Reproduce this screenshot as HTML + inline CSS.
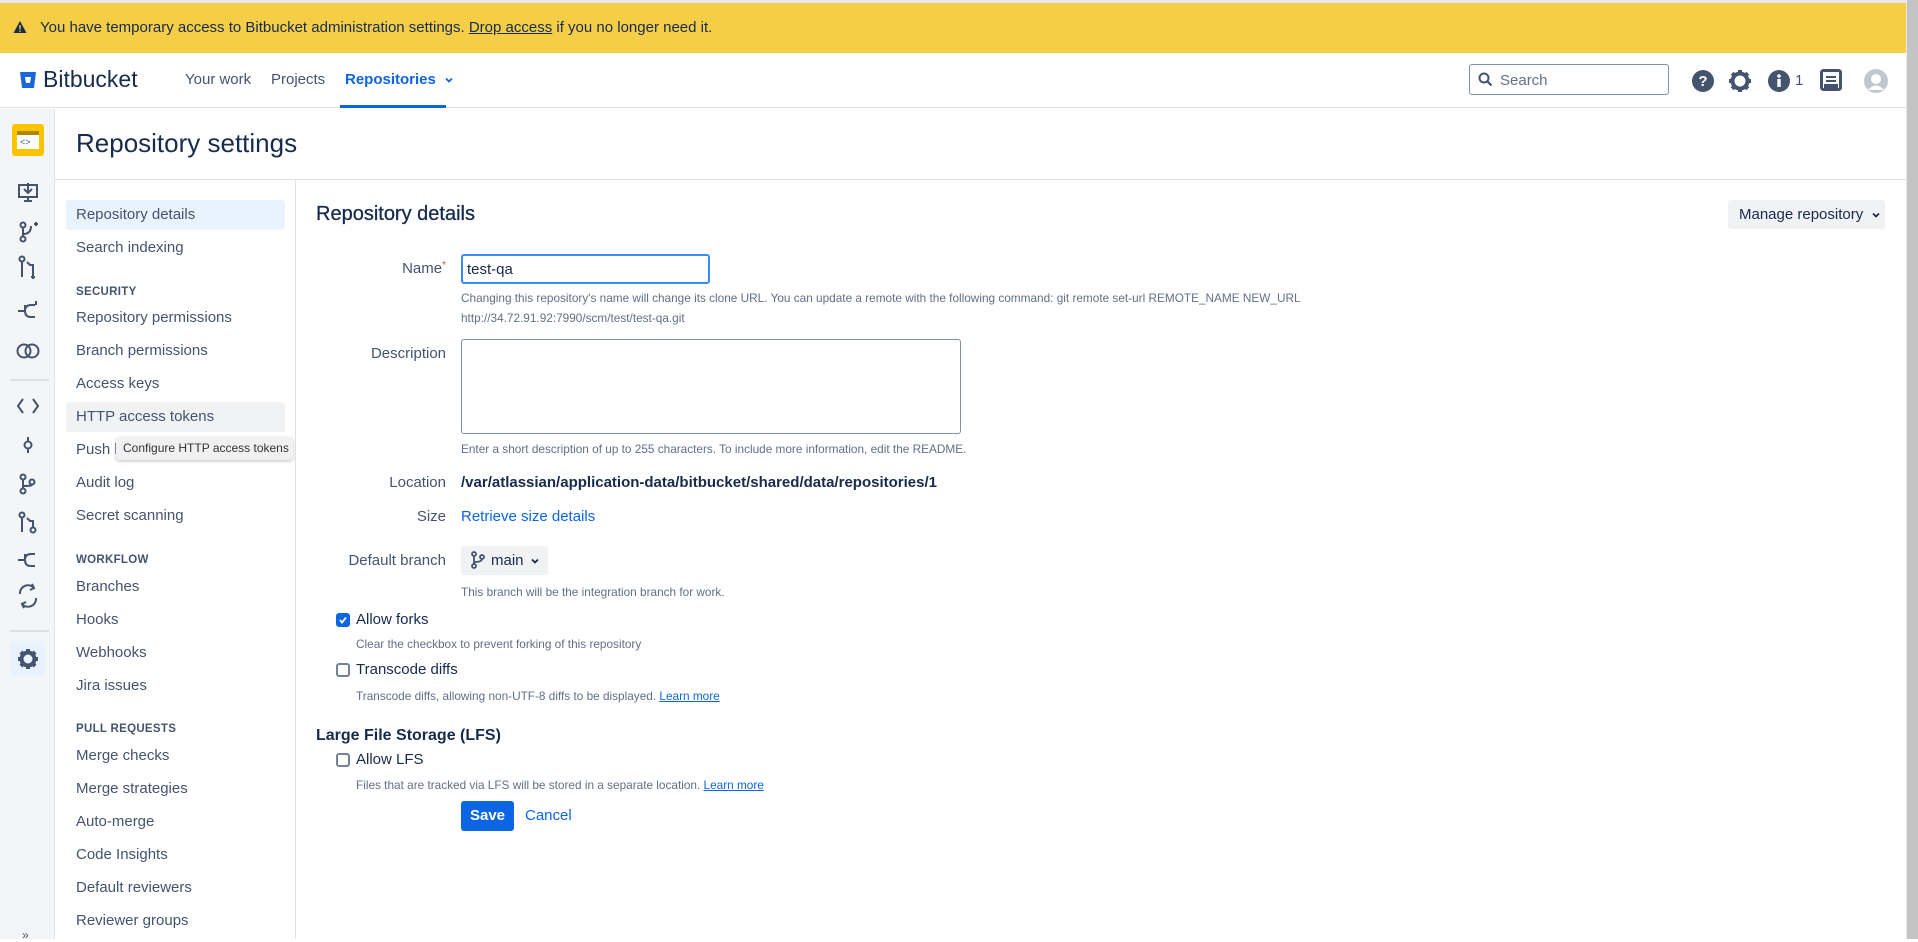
<!DOCTYPE html>
<html><head><meta charset="utf-8">
<style>
*{box-sizing:border-box;margin:0;padding:0}
body{width:1918px;height:939px;overflow:hidden;background:#fff;font-family:"Liberation Sans",Arial,sans-serif;color:#172b4d;position:relative}
.a{position:absolute;white-space:nowrap}
.banner{left:0;top:3px;width:1906px;height:50px;background:#f5cd47}
.topline{left:0;top:0;width:1906px;height:3px;background:#eae6f0}
.nav{left:0;top:53px;width:1906px;height:55px;border-bottom:1px solid #dfe1e6;background:#fff}
.side{left:0;top:109px;width:55px;height:830px;background:#f4f5f7;border-right:1px solid #dfe1e6}
.sb{right:0;top:0;width:12px;height:939px;background:#c4c4c4;border-left:1px solid #e8e8e8}
.ni{left:76px;font-size:15px;color:#44546f}
.nh{left:76px;font-size:11.5px;font-weight:bold;color:#44546f;letter-spacing:.3px}
.lbl{font-size:15px;color:#44546f;text-align:right;width:200px;left:246px}
.help{font-size:11.8px;color:#626f86;left:461px}
.chev{display:inline-block;vertical-align:middle;margin-left:4px}
</style></head><body>
<div class="a topline"></div>
<div class="a banner"></div>
<svg class="a" style="left:13px;top:20px" width="14" height="14" viewBox="0 0 14 14"><path d="M7 1 L13.5 13 H0.5 Z" fill="#172b4d"/><rect x="6.3" y="5" width="1.4" height="4.5" fill="#f5cd47"/><rect x="6.3" y="10.5" width="1.4" height="1.4" fill="#f5cd47"/></svg>
<div class="a" style="left:40px;top:19px;font-size:15px;color:#172b4d">You have temporary access to Bitbucket administration settings. <span style="text-decoration:underline">Drop access</span> if you no longer need it.</div>

<div class="a nav"></div>
<svg class="a" style="left:20px;top:71px" width="16" height="18" viewBox="0 0 16 18"><path d="M0 1 H16 L14 17 H2 Z" fill="#1868db"/><path d="M5 6 H11 L10 12 H6 Z" fill="#fff"/></svg>
<div class="a" style="left:43px;top:66px;font-size:23px;color:#172b4d">Bitbucket</div>
<div class="a" style="left:185px;top:71px;font-size:15px;color:#44546f">Your work</div>
<div class="a" style="left:271px;top:71px;font-size:15px;color:#44546f">Projects</div>
<div class="a" style="left:345px;top:71px;font-size:15px;color:#0c66e4;font-weight:bold">Repositories<svg class="chev" style="margin-left:8px" width="10" height="8" viewBox="0 0 10 8"><path d="M2 2.5 L5 5.5 L8 2.5" fill="none" stroke="#0c66e4" stroke-width="1.8"/></svg></div>
<div class="a" style="left:340px;top:105px;width:106px;height:3px;background:#0c66e4"></div>
<div class="a" style="left:1469px;top:64px;width:200px;height:31px;border:1px solid #8590a2;border-radius:3px"></div>
<svg class="a" style="left:1478px;top:72px" width="15" height="15" viewBox="0 0 15 15"><circle cx="6" cy="6" r="4.5" fill="none" stroke="#44546f" stroke-width="2"/><path d="M9.5 9.5 L13.5 13.5" stroke="#44546f" stroke-width="2.2"/></svg>
<div class="a" style="left:1500px;top:72px;font-size:15px;color:#626f86">Search</div>
<svg class="a" style="left:1691px;top:69px" width="24" height="24" viewBox="0 0 24 24"><circle cx="12" cy="12" r="11" fill="#44546f"/><text x="12" y="17" text-anchor="middle" font-family="Liberation Sans" font-weight="bold" font-size="15" fill="#fff">?</text></svg>
<svg class="a" style="left:1728px;top:69px" width="24" height="24" viewBox="0 0 24 24"><circle cx="12" cy="12" r="7.5" fill="none" stroke="#44546f" stroke-width="4"/><g fill="#44546f"><rect x="10" y="1" width="4" height="5"/><rect x="10" y="18" width="4" height="5"/><rect x="1" y="10" width="5" height="4"/><rect x="18" y="10" width="5" height="4"/><rect x="10" y="1" width="4" height="5" transform="rotate(45 12 12)"/><rect x="10" y="18" width="4" height="5" transform="rotate(45 12 12)"/><rect x="1" y="10" width="5" height="4" transform="rotate(45 12 12)"/><rect x="18" y="10" width="5" height="4" transform="rotate(45 12 12)"/></g></svg>
<svg class="a" style="left:1767px;top:69px" width="24" height="24" viewBox="0 0 24 24"><circle cx="12" cy="12" r="11" fill="#44546f"/><circle cx="12" cy="7" r="1.8" fill="#fff"/><rect x="10.3" y="10" width="3.4" height="8" fill="#fff"/></svg>
<div class="a" style="left:1795px;top:72px;font-size:15px;color:#44546f">1</div>
<svg class="a" style="left:1820px;top:69px" width="22" height="22" viewBox="0 0 22 22"><rect x="1.5" y="1.5" width="19" height="19" rx="2" fill="none" stroke="#44546f" stroke-width="3"/><rect x="6" y="7" width="10" height="2" fill="#44546f"/><rect x="6" y="11" width="10" height="2" fill="#44546f"/><rect x="4" y="15" width="14" height="4" fill="#44546f"/></svg>
<svg class="a" style="left:1863px;top:68px" width="26" height="26" viewBox="0 0 26 26"><circle cx="13" cy="13" r="12" fill="#c1c7d0"/><circle cx="13" cy="11" r="5" fill="#fff"/><path d="M5 22 Q13 13 21 22" fill="#fff"/></svg>

<div class="a side"></div>
<div class="a" style="left:12px;top:124px;width:32px;height:32px;background:#ffc400;border-radius:3px"></div>
<div class="a" style="left:17px;top:131px;width:22px;height:18px;background:#fff;border-top:4px solid #b38600"></div>
<div class="a" style="left:20px;top:137px;font-size:9px;color:#44546f">&lt;&gt;</div>
<svg class="a" style="left:15px;top:180px" width="26" height="440" viewBox="0 0 26 440" fill="none" stroke="#44546f" stroke-width="2">
<path d="M4 5 H22 V17 H4 Z M13 3 V12 M9 9 L13 13 L17 9 M9 21 H17 M13 17 V21"/>
<circle cx="8" cy="45" r="2.5"/><circle cx="8" cy="59" r="2.5"/><path d="M8 47 V57 M8 54 Q16 54 16 46 M19 44 H23 M21 42 V46"/>
<circle cx="7" cy="79" r="2.5"/><path d="M7 82 V97 M12 82 L15 85 L18 85 V97 M18 95 V99 M16 97 H20"/>
<path d="M3 131 H10 M10 125 Q10 131 10 131 Q10 137 16 137 H20 M10 131 Q10 125 16 125 H20 M21 121 V125"/>
<circle cx="9" cy="171" r="6.5"/><circle cx="17" cy="171" r="6.5"/>
<path d="M8 219 L3 226 L8 233 M18 219 L23 226 L18 233"/>
<circle cx="13" cy="265" r="3.5"/><path d="M13 257 V261 M13 269 V273"/>
<circle cx="8" cy="297" r="2.5"/><circle cx="8" cy="311" r="2.5"/><circle cx="17" cy="302" r="2.5"/><path d="M8 299 V309 M8 306 Q16 306 17 305"/>
<circle cx="7" cy="335" r="2.5"/><circle cx="18" cy="350" r="2.5"/><path d="M7 338 V352 M12 338 L15 341 L18 341 V347"/>
<path d="M3 380 H10 M10 374 Q10 380 10 380 Q10 386 16 386 H20 M10 380 Q10 374 16 374 H20"/>
<path d="M19 408 A8 8 0 0 0 5 414 M7 424 A8 8 0 0 0 21 418 M17 404 L19 408 L15 410 M9 428 L7 424 L11 422"/>
</svg>
<div class="a" style="left:10px;top:379px;width:39px;height:2px;background:#dcdfe4"></div>
<div class="a" style="left:10px;top:630px;width:39px;height:2px;background:#dcdfe4"></div>
<div class="a" style="left:10px;top:641px;width:35px;height:35px;background:#e9f2ff;border-radius:3px"></div>
<svg class="a" style="left:16px;top:647px" width="24" height="24" viewBox="0 0 24 24"><circle cx="12" cy="12" r="6.5" fill="none" stroke="#44546f" stroke-width="4"/><g fill="#44546f"><rect x="10" y="2" width="4" height="4"/><rect x="10" y="18" width="4" height="4"/><rect x="2" y="10" width="4" height="4"/><rect x="18" y="10" width="4" height="4"/><g transform="rotate(45 12 12)"><rect x="10" y="2" width="4" height="4"/><rect x="10" y="18" width="4" height="4"/><rect x="2" y="10" width="4" height="4"/><rect x="18" y="10" width="4" height="4"/></g></g></svg>
<div class="a" style="left:22px;top:928px;font-size:12px;color:#44546f">»</div>

<div class="a" style="left:76px;top:128px;font-size:26px;color:#172b4d">Repository settings</div>
<div class="a" style="left:55px;top:179px;width:1851px;height:1px;background:#dfe1e6"></div>
<div class="a" style="left:295px;top:180px;width:1px;height:759px;background:#dfe1e6"></div>

<div class="a" style="left:66px;top:200px;width:219px;height:30px;background:#e9f2ff;border-radius:3px"></div>
<div class="a" style="left:66px;top:402px;width:219px;height:30px;background:#f1f2f4;border-radius:3px"></div>
<div class="a ni" style="top:206px">Repository details</div>
<div class="a ni" style="top:239px">Search indexing</div>
<div class="a nh" style="top:286px">SECURITY</div>
<div class="a ni" style="top:309px">Repository permissions</div>
<div class="a ni" style="top:342px">Branch permissions</div>
<div class="a ni" style="top:375px">Access keys</div>
<div class="a ni" style="top:408px">HTTP access tokens</div>
<div class="a ni" style="top:441px">Push log</div>
<div class="a ni" style="top:474px">Audit log</div>
<div class="a ni" style="top:507px">Secret scanning</div>
<div class="a nh" style="top:554px">WORKFLOW</div>
<div class="a ni" style="top:578px">Branches</div>
<div class="a ni" style="top:611px">Hooks</div>
<div class="a ni" style="top:644px">Webhooks</div>
<div class="a ni" style="top:677px">Jira issues</div>
<div class="a nh" style="top:723px">PULL REQUESTS</div>
<div class="a ni" style="top:747px">Merge checks</div>
<div class="a ni" style="top:780px">Merge strategies</div>
<div class="a ni" style="top:813px">Auto-merge</div>
<div class="a ni" style="top:846px">Code Insights</div>
<div class="a ni" style="top:879px">Default reviewers</div>
<div class="a ni" style="top:912px">Reviewer groups</div>
<div class="a" style="left:116px;top:437px;width:177px;height:23px;background:#f1f1f1;border-radius:3px;box-shadow:0 1px 3px rgba(0,0,0,.25);font-size:12px;color:#333;padding:4px 7px">Configure HTTP access tokens</div>

<div class="a" style="left:316px;top:203px;font-size:20px;color:#172b4d;-webkit-text-stroke:0.3px #172b4d">Repository details</div>
<div class="a" style="left:1728px;top:200px;width:157px;height:29px;background:#f1f2f4;border-radius:3px;font-size:15px;color:#172b4d;padding:6px 11px">Manage repository<svg class="chev" style="margin-left:8px" width="10" height="8" viewBox="0 0 10 8"><path d="M2 2.5 L5 5.5 L8 2.5" fill="none" stroke="#172b4d" stroke-width="1.8"/></svg></div>

<div class="a lbl" style="top:260px">Name<span style="color:#e34935;font-size:10px;vertical-align:top">*</span></div>
<div class="a" style="left:461px;top:254px;width:249px;height:30px;border:2px solid #388bff;border-radius:3px;font-size:15px;padding:5px 4px">test-qa</div>
<div class="a help" style="top:291px">Changing this repository's name will change its clone URL. You can update a remote with the following command: git remote set-url REMOTE_NAME NEW_URL</div>
<div class="a help" style="top:311px">http://34.72.91.92:7990/scm/test/test-qa.git</div>
<div class="a lbl" style="top:345px">Description</div>
<div class="a" style="left:461px;top:339px;width:500px;height:95px;border:1px solid #8590a2;border-radius:3px"></div>
<div class="a help" style="top:442px">Enter a short description of up to 255 characters. To include more information, edit the README.</div>
<div class="a lbl" style="top:474px">Location</div>
<div class="a" style="left:461px;top:474px;font-size:15px;font-weight:bold">/var/atlassian/application-data/bitbucket/shared/data/repositories/1</div>
<div class="a lbl" style="top:508px">Size</div>
<div class="a" style="left:461px;top:508px;font-size:15px;color:#0c66e4">Retrieve size details</div>
<div class="a lbl" style="top:552px">Default branch</div>
<div class="a" style="left:461px;top:546px;width:87px;height:29px;background:#f1f2f4;border-radius:3px"></div>
<svg class="a" style="left:470px;top:551px" width="16" height="18" viewBox="0 0 16 18" fill="none" stroke="#44546f" stroke-width="1.8"><circle cx="4" cy="3" r="2"/><circle cx="4" cy="15" r="2"/><circle cx="12" cy="6" r="2"/><path d="M4 5 V13 M4 11 Q12 11 12 8"/></svg>
<div class="a" style="left:491px;top:552px;font-size:15px;color:#172b4d">main<svg class="chev" style="margin-left:6px" width="10" height="8" viewBox="0 0 10 8"><path d="M2 2.5 L5 5.5 L8 2.5" fill="none" stroke="#172b4d" stroke-width="1.8"/></svg></div>
<div class="a help" style="top:585px">This branch will be the integration branch for work.</div>

<div class="a" style="left:336px;top:613px;width:14px;height:14px;background:#0c66e4;border-radius:3px"></div>
<svg class="a" style="left:336px;top:613px" width="14" height="14" viewBox="0 0 14 14"><path d="M4 7 L6 9.5 L10 4.5" fill="none" stroke="#fff" stroke-width="1.8"/></svg>
<div class="a" style="left:356px;top:611px;font-size:15px">Allow forks</div>
<div class="a help" style="left:356px;top:637px">Clear the checkbox to prevent forking of this repository</div>
<div class="a" style="left:336px;top:663px;width:14px;height:14px;border:2px solid #758195;border-radius:3px"></div>
<div class="a" style="left:356px;top:661px;font-size:15px">Transcode diffs</div>
<div class="a help" style="left:356px;top:689px">Transcode diffs, allowing non-UTF-8 diffs to be displayed. <span style="color:#0c66e4;text-decoration:underline">Learn more</span></div>
<div class="a" style="left:316px;top:727px;font-size:16px;font-weight:bold">Large File Storage (LFS)</div>
<div class="a" style="left:336px;top:753px;width:14px;height:14px;border:2px solid #758195;border-radius:3px"></div>
<div class="a" style="left:356px;top:751px;font-size:15px">Allow LFS</div>
<div class="a help" style="left:356px;top:778px">Files that are tracked via LFS will be stored in a separate location. <span style="color:#0c66e4;text-decoration:underline">Learn more</span></div>
<div class="a" style="left:461px;top:801px;width:53px;height:30px;background:#0c66e4;border-radius:3px;color:#fff;font-weight:bold;font-size:15px;text-align:center;padding-top:6px">Save</div>
<div class="a" style="left:525px;top:807px;font-size:15px;color:#0c66e4">Cancel</div>

<div class="a sb"></div>
</body></html>
